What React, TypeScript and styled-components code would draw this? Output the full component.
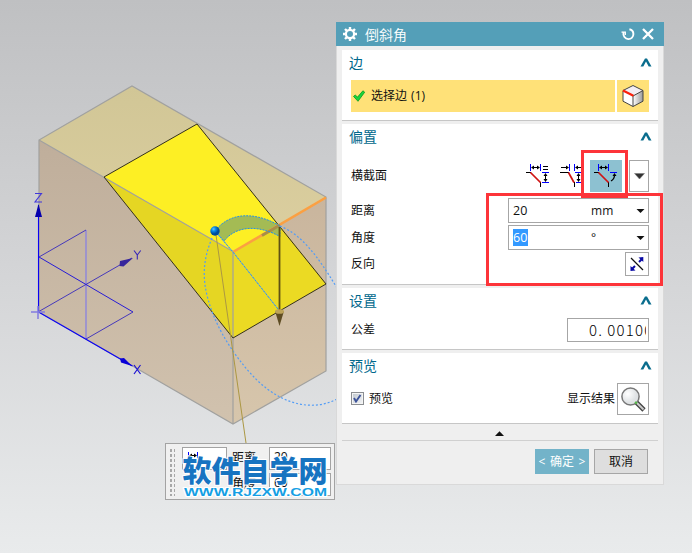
import React from "react";
import styled, { createGlobalStyle } from "styled-components";

const sans = `"Open Sans", "Noto Sans CJK SC", sans-serif`;

const GlobalStyle = createGlobalStyle`
  *, *::before, *::after { box-sizing: border-box; }
  body { margin: 0; overflow: hidden; }
`;

const Viewport = styled.div`
  position: relative;
  width: 692px;
  height: 553px;
  overflow: hidden;
  background: linear-gradient(#bfc0c2, #d4d5d7 50%, #e9ebec);
  font: 12px/16px ${sans};
  color: #111;
`;

const Scene = styled.svg`
  position: absolute;
  left: 0;
  top: 0;
`;

const Dialog = styled.section`
  position: absolute;
  left: 336px;
  top: 22px;
  width: 328px;
  height: 463px;
  display: flex;
  flex-direction: column;
  background: #efefef;
  border: 1px solid #d9d9d9;
  border-top: 0;
`;

const TitleBar = styled.header`
  display: flex;
  align-items: center;
  flex: none;
  height: 24px;
  margin: 0 -1px;
  padding: 0 9px 0 7px;
  background: #549fb8;
  color: #fff;
  font-size: 14px;
`;

const TitleText = styled.span`
  flex: 1;
  margin-left: 8px;
  padding-top: 1px;
  font-weight: 350;
`;

const Sections = styled.div`
  display: flex;
  flex-direction: column;
  padding: 4px 5px 0;
`;

const Card = styled.div<{ $height: number; $gap: number }>`
  height: ${(p) => p.$height}px;
  margin-bottom: ${(p) => p.$gap}px;
  padding: 0 9px;
  background: #fff;
  border-bottom: 1px solid #c6c6c6;
`;

const CardHeader = styled.div<{ $height: number }>`
  display: flex;
  justify-content: space-between;
  height: ${(p) => p.$height}px;
  margin: 0 -4px 0 -2px;
  padding-top: 3px;
  color: #00688c;
  font-size: 14px;
  line-height: 20px;
  svg { margin-top: 5px; }
`;

const Row = styled.div<{ $height: number; $gap?: number }>`
  display: flex;
  align-items: center;
  height: ${(p) => p.$height}px;
  margin-bottom: ${(p) => p.$gap ?? 0}px;
`;

const Label = styled.span`
  flex: 1;
`;

const Selection = styled.div`
  display: flex;
  align-items: center;
  gap: 6px;
  width: 264px;
  height: 32px;
  margin-right: 2px;
  padding-left: 2px;
  background: #ffe178;
  word-spacing: 1px;
`;

const IconButton = styled.button<{ $w: number; $h: number; $bg?: string; $framed?: boolean; $gap?: number }>`
  display: grid;
  place-items: center;
  flex: none;
  width: ${(p) => p.$w}px;
  height: ${(p) => p.$h}px;
  margin: 0 0 0 ${(p) => p.$gap ?? 0}px;
  padding: 0;
  border: ${(p) => (p.$framed ? "1px solid #a6a6a6" : "0")};
  background: ${(p) => p.$bg ?? "#fff"};
`;

const ValueField = styled.div`
  display: flex;
  align-items: center;
  width: 141px;
  height: 25px;
  padding: 0 3px 0 4px;
  border: 1px solid #a6a6a6;
  background: #fff;
`;

const FieldValue = styled.span<{ $selected?: boolean }>`
  width: 15px;
  height: 17px;
  font-size: 12.5px;
  line-height: 17px;
  letter-spacing: 0.2px;
  margin-bottom: 1px;
  background: ${(p) => (p.$selected ? "#3399ff" : "transparent")};
  color: ${(p) => (p.$selected ? "#fff" : "#111")};
`;

const ValueSlot = styled.span`
  display: flex;
  width: 78px;
`;

const Unit = styled.span`
  flex: 1;
  letter-spacing: 0.2px;
  padding-top: 1px;
`;

const ToleranceField = styled.div`
  width: 82px;
  height: 24px;
  padding: 0 0 0 21px;
  border: 1px solid #a6a6a6;
  font: 300 15px/21px "Noto Sans CJK SC", sans-serif;
  color: #000;
`;

const ToleranceText = styled.div`
  width: 57px;
  overflow: hidden;
  white-space: nowrap;
  letter-spacing: 1.2px;
`;

const Dot = styled.span`
  display: inline-block;
  width: 9px;
`;

const CheckBox = styled.span`
  display: grid;
  place-items: center;
  width: 13px;
  height: 13px;
  margin: -1px 5px 0 0;
  border: 1px solid #8b8e91;
  background: linear-gradient(135deg, #bfc6cd, #f5f6f7);
  box-shadow: inset 0 0 0 1px #f4f4f4;
`;

const Collapse = styled.div`
  display: grid;
  place-items: center;
  height: 17px;
  padding: 3px 2px 0 0;
  border-bottom: 1px solid #d0d0d0;
`;

const Footer = styled.footer`
  display: flex;
  justify-content: flex-end;
  gap: 5px;
  padding: 8px 15px 0 0;
`;

const ActionButton = styled.button<{ $primary?: boolean }>`
  width: 54px;
  height: 25px;
  padding: 0;
  border: ${(p) => (p.$primary ? "0" : "1px solid #a6a6a6")};
  background: ${(p) => (p.$primary ? "#73b3c9" : "#dedede")};
  color: ${(p) => (p.$primary ? "#fff" : "#111")};
  font: 12px/16px ${sans};
  word-spacing: ${(p) => (p.$primary ? "1.5px" : "0")};
  white-space: nowrap;
`;

const Highlight = styled.div<{ $x: number; $y: number; $w: number; $h: number }>`
  position: absolute;
  left: ${(p) => p.$x}px;
  top: ${(p) => p.$y}px;
  width: ${(p) => p.$w}px;
  height: ${(p) => p.$h}px;
  border: 3px solid #fd3439;
  pointer-events: none;
`;

const FloatingBar = styled.div`
  position: absolute;
  left: 165px;
  top: 443px;
  width: 170px;
  height: 57px;
  display: flex;
  padding: 3px 3px 3px 2px;
  border: 1px solid #a3a3a3;
  background: #f0f0f0;
`;

const Grip = styled.div`
  width: 8px;
  background-image: linear-gradient(90deg, #f0f0f0 2px, transparent 2px),
    linear-gradient(#f0f0f0 2px, #a8a8a8 2px);
  background-size: 4px 5px;
`;

const BarRows = styled.div`
  display: grid;
  grid-template-columns: 45px 32px 62px;
  grid-template-rows: 23px 23px;
  gap: 3px 5px;
  margin-left: 7px;
`;

const BarCell = styled.div<{ $framed?: boolean }>`
  padding: ${(p) => (p.$framed ? "1px 4px" : "3px 0")};
  border: ${(p) => (p.$framed ? "1px solid #a3a3a3" : "0")};
  background: ${(p) => (p.$framed ? "#fff" : "transparent")};
`;

const Chevron = () => (
  <svg width="13" height="9" viewBox="0 0 13 9">
    <path d="M0.500 8.500 5 0.600h2l4.500 7.900H8.700L6 3.500 3.300 8.500z" fill="#0a6d8d" />
  </svg>
);

const DownArrow = () => (
  <svg width="9" height="6" viewBox="0 0 9 6">
    <path d="M0.500 1h8L4.500 5z" fill="#111" />
  </svg>
);

const Gear = () => (
  <svg width="14" height="14" viewBox="0 0 14 14" fill="none" stroke="#fff">
    <circle cx="7" cy="7" r="4.100" strokeWidth="2.200" />
    <path
      d="M7 0v2.500M7 11.500V14M0 7h2.500M11.500 7H14M2 2l2 2M10 10l2 2M12 2l-2 2M4 10l-2 2"
      strokeWidth="2.400"
    />
  </svg>
);

const ResetIcon = () => (
  <svg width="14" height="14" viewBox="0 0 14 14" fill="none" stroke="#fff">
    <path d="M2.500 5C1.800 9 4.200 12.100 7.300 12.100c3 0 5.100-2.300 5.100-5.100 0-2.500-1.500-4.300-4-4.800" strokeWidth="1.900" />
    <path d="M0.500 5.200h3.800V8" strokeWidth="1.300" />
  </svg>
);

const CloseIcon = () => (
  <svg width="12" height="12" viewBox="0 0 12 12">
    <path d="m1 1 10 10M11 1 1 11" stroke="#fff" strokeWidth="2.300" />
  </svg>
);

const CheckIcon = () => (
  <svg width="12" height="12" viewBox="0 0 12 12">
    <path d="M0.500 6.400 2.200 5 4.500 7.100 9.900 0.800 11.700 2.200 5 11.300z" fill="#19d63c" stroke="#0b9820" strokeWidth="0.800" />
  </svg>
);

const CubeIcon = () => (
  <svg width="24" height="24" viewBox="0 0 24 24">
    <defs>
      <linearGradient id="cubeSide" x2="1">
        <stop stopColor="#fff" />
        <stop offset="1" stopColor="#999" />
      </linearGradient>
    </defs>
    <path d="M12 12 22 6.500v10.700L12 22.500z" fill="url(#cubeSide)" />
    <path d="M2 6.500 12 12v10.500L2 17.200z" fill="#fff" />
    <path d="m2 6.500 10-5 10 5L12 12z" fill="#f3eef4" />
    <path d="m2 6.500 10-5 10 5v10.700l-10 5.300-10-5.300zM12 12v10.500M12 12l10-5.500" fill="none" stroke="#444" />
    <path d="m2 6.500 10.400 5.300" stroke="#fb210b" strokeWidth="2.200" />
  </svg>
);

type ChamferKind = "symmetric" | "asymmetric" | "angle";

const ChamferIcon = ({ kind }: { kind: ChamferKind }) => {
  const narrow = kind === "asymmetric";
  return (
    <svg width="26" height="26" viewBox="0 1 26 26" fill="none">
      <path d={narrow ? "M1 10.500h9M15.500 20v5" : "M1 10.500h5M15.500 20v5"} stroke="#000" />
      <path d={narrow ? "m9.500 10.500 5.500 10" : "m5.500 10.500 10 10"} stroke="#d01414" strokeWidth="1.700" />
      {narrow ? (
        <>
          <path d="M10.500 2v7M15.500 2v7M16 10.500h7M17 20.500h6" stroke="#00f" />
          <path d="M2 5.500h6M18 5.500h6M19.500 13v5" stroke="#000" />
          <path d="m10 5.500-3-2v4zM16 5.500l3-2v4zM19.500 11l-2 3h4zM19.500 20l-2-3h4z" fill="#000" />
        </>
      ) : (
        <>
          <path d={`M5.500 2v7M15.500 2v7M17 10.500h7${kind === "symmetric" ? "M17 20.500h7" : ""}`} stroke="#00f" />
          <path d="M8 5.500h5" stroke="#000" />
          <path d="m6 5.500 3-2v4zM15 5.500l-3-2v4z" fill="#000" />
          {kind === "symmetric" ? (
            <>
              <path d="M18 4.500h5M18 7.500h5M20.500 13v5" stroke="#000" />
              <path d="m20.500 11-2 3h4zM20.500 20l-2-3h4z" fill="#000" />
            </>
          ) : (
            <>
              <path d="M21.500 13q0 4-3.500 6" stroke="#000" strokeWidth="1.300" />
              <path d="m21.500 11-2 3h4z" fill="#000" />
            </>
          )}
        </>
      )}
    </svg>
  );
};

const ReverseIcon = () => (
  <svg width="16" height="16" viewBox="0 0 16 16">
    <path d="m2 2 12 12" stroke="#111" strokeWidth="1.200" />
    <path d="M3 13 6 10M10 6l3-3" stroke="#0a0aa5" strokeWidth="2" />
    <path d="M14.300 1v5L9.500 1.500zM1.500 15v-5l5 4.500z" fill="#0a0aa5" />
  </svg>
);

const Magnifier = () => (
  <svg width="26" height="26" viewBox="0 0 26 26">
    <defs>
      <radialGradient id="lens" cx="0.350" cy="0.350">
        <stop stopColor="#fff" />
        <stop offset="1" stopColor="#dfe2e4" />
      </radialGradient>
    </defs>
    <path d="m16 16 8 8" stroke="#444" strokeWidth="4.600" />
    <path d="m16 16 7.500 7.500" stroke="#ccc" strokeWidth="2" />
    <circle cx="10.500" cy="10.500" r="8.600" fill="url(#lens)" stroke="#777" strokeWidth="1.500" />
    <path d="m15 16 2 1.500" stroke="#54bf45" strokeWidth="2" />
  </svg>
);

const Model = () => (
  <Scene width="692" height="553" viewBox="0 0 692 553" fill="none">
    <defs>
      <linearGradient id="topFace" x2="0" y2="1">
        <stop stopColor="#d1c696" />
        <stop offset="1" stopColor="#dccfa0" />
      </linearGradient>
      <linearGradient id="leftFace" x2="0" y2="1">
        <stop stopColor="#bfae9b" />
        <stop offset="1" stopColor="#d1c2ae" />
      </linearGradient>
      <linearGradient id="rightFace" x2="0" y2="1">
        <stop stopColor="#c9b59d" />
        <stop offset="1" stopColor="#d7c6ac" />
      </linearGradient>
      <radialGradient id="handle" cx="0.350" cy="0.300">
        <stop stopColor="#62c3ff" />
        <stop offset="0.450" stopColor="#078be7" />
        <stop offset="1" stopColor="#004c9a" />
      </radialGradient>
    </defs>

    <path d="m39 140 93-54 194 111-93 54.500z" fill="url(#topFace)" />
    <path d="m39 140 194 111.500V424L39 312z" fill="url(#leftFace)" />
    <path d="m233 251.500 93-54.500v174l-93 53z" fill="url(#rightFace)" />
    <path d="m104 177 93-53 82.500 102L233 251.500z" fill="#fdef24" />
    <path d="m104 177 129 74.500V338z" fill="#e5d623" />
    <path d="m233 251.500 46.500-26L326 284l-93 54z" fill="#ebda23" />

    <path d="M39 312V140l93-54 194 111v174l-93 53zM39 140l194 111.500V424" stroke="#a1a19f" strokeWidth="1.200" />
    <path d="m104 177 93-53 129 160-93 54z" stroke="#34301d" />

    <path d="M215 231c17-22 45-17 65-5v10.500c-20-11-43-12-56 4.500z" fill="#a4bb54" />
    <path d="m233 252 93-54.500" stroke="#fba042" strokeWidth="2.600" />
    <path d="m262 235.500 18-10.500" stroke="#a98e48" strokeWidth="2.800" />
    <path
      d="M215 231c17-22 45-17 65-5v10.500c-20-11-43-12-56 4.500z"
      stroke="#2490e8"
      strokeDasharray="2 1"
    />
    <path d="m215 231 18 21 46.500 59" stroke="#84b3bd" />
    <path d="m215 231 18 21 46.500 59" stroke="#2f93ee" strokeDasharray="2 1.500" />
    <path
      d="M212 238c-7 17-9 31-7 47 3 20 12 43 28 66 15 22 31 38 47 46 17 9 38 12 57 2M280 226c22 9 37 29 57 62"
      stroke="#529cf6"
      strokeWidth="1.200"
      strokeDasharray="2 2"
    />
    <path d="M279.500 227v85" stroke="#5f5113" strokeWidth="1.800" />
    <path d="m275 311 4.500 15 4.500-15z" fill="#5e4c23" />
    <ellipse cx="279.500" cy="311.500" rx="4.500" ry="2.300" fill="#bda359" />
    <path d="m216 235 30 208" stroke="#ab9743" />
    <circle cx="215" cy="231" r="4.700" fill="url(#handle)" />

    <path d="M86 230v109" stroke="#9189d8" strokeWidth="1.500" />
    <path d="m39 257 47-27M133 312l-47 27M38 312l94-54" stroke="#4639bb" />
    <path d="m39 257 94 55" stroke="#271cd6" />
    <path d="M38.500 312V205M38.500 312l94 54" stroke="#0a00f5" strokeWidth="1.100" />
    <path d="M31 312h14M38 306v13" stroke="#827be0" strokeWidth="1.500" />
    <path d="M38.500 204 35 217h7z" fill="#0500ad" />
    <path d="m133 258-13 3-0.500 5 4 0.500z" fill="#37259c" />
    <path d="m132 366-8-8-4 0.500 1 4z" fill="#0800d7" />
    <path d="M35 193.500h6.500l-6.500 8.500h7" stroke="#4036dc" strokeWidth="1.100" />
    <path d="m134 250.500 3.300 4.500v4.500M140.700 250.500l-3.400 4.500" stroke="#3726b8" strokeWidth="1.100" />
    <path d="m134 365 6.500 9M140.500 365l-6.500 9" stroke="#1d12d4" strokeWidth="1.200" />
  </Scene>
);

const MiniChamfer = () => (
  <svg width="26" height="16" viewBox="0 0 26 16" fill="none">
    <path d="M1.500 3v7M10.500 3v7" stroke="#00f" />
    <path d="M3 6.500h6" stroke="#000" />
    <path d="m2 6.500 3-2v4zM10 6.500l-3-2v4z" fill="#000" />
  </svg>
);

const Watermark = () => (
  <Scene width="692" height="553" viewBox="0 0 692 553">
    <g stroke="#fff" strokeLinejoin="round">
      <text
        x="182.500"
        y="481.500"
        textLength="145"
        lengthAdjust="spacingAndGlyphs"
        fontFamily='"Noto Sans CJK SC", sans-serif'
        fontSize="29"
        fontWeight="900"
        fill="#1774c1"
        strokeWidth="2"
        paintOrder="stroke"
      >
        软件自学网
      </text>
      <text
        x="184"
        y="495.500"
        textLength="143"
        lengthAdjust="spacingAndGlyphs"
        fontFamily='"Liberation Sans", sans-serif'
        fontSize="11"
        fontWeight="700"
        fill="#159fe4"
        strokeWidth="2"
        paintOrder="stroke"
      >
        WWW.RJZXW.COM
      </text>
    </g>
  </Scene>
);

export default function App() {
  return (
    <Viewport>
      <GlobalStyle />
      <Model />

      <FloatingBar>
        <Grip />
        <BarRows>
          <BarCell $framed><MiniChamfer /></BarCell>
          <BarCell>距离</BarCell>
          <BarCell $framed>20</BarCell>
          <BarCell />
          <BarCell>角度</BarCell>
          <BarCell $framed>60</BarCell>
        </BarRows>
      </FloatingBar>
      <Watermark />

      <Dialog>
        <TitleBar>
          <Gear />
          <TitleText>倒斜角</TitleText>
          <ResetIcon />
          <IconButton $w={14} $h={14} $bg="transparent" $gap={6}>
            <CloseIcon />
          </IconButton>
        </TitleBar>

        <Sections>
          <Card $height={71} $gap={3}>
            <CardHeader $height={30}>边<Chevron /></CardHeader>
            <Row $height={32}>
              <Selection>
                <CheckIcon />
                <span>选择边 (1)</span>
              </Selection>
              <IconButton $w={32} $h={32} $bg="#ffe178"><CubeIcon /></IconButton>
            </Row>
          </Card>

          <Card $height={161} $gap={3}>
            <CardHeader $height={36}>偏置<Chevron /></CardHeader>
            <Row $height={32} $gap={6}>
              <Label>横截面</Label>
              <IconButton $w={32} $h={32}><ChamferIcon kind="symmetric" /></IconButton>
              <IconButton $w={32} $h={32} $gap={2}><ChamferIcon kind="asymmetric" /></IconButton>
              <IconButton $w={32} $h={32} $bg="#8dc1d1" $gap={2}><ChamferIcon kind="angle" /></IconButton>
              <IconButton $w={20} $h={32} $framed $gap={7}>
                <svg width="11" height="7"><path d="M0.500 0.500h10L5.500 6z" fill="#333" stroke="#777" strokeWidth="0.500" /></svg>
              </IconButton>
            </Row>
            <Row $height={25} $gap={2}>
              <Label>距离</Label>
              <ValueField>
                <ValueSlot><FieldValue>20</FieldValue></ValueSlot>
                <Unit>mm</Unit>
                <DownArrow />
              </ValueField>
            </Row>
            <Row $height={25} $gap={2}>
              <Label>角度</Label>
              <ValueField>
                <ValueSlot><FieldValue $selected>60</FieldValue></ValueSlot>
                <Unit>°</Unit>
                <DownArrow />
              </ValueField>
            </Row>
            <Row $height={24}>
              <Label>反向</Label>
              <IconButton $w={24} $h={24} $framed><ReverseIcon /></IconButton>
            </Row>
          </Card>

          <Card $height={62} $gap={3}>
            <CardHeader $height={30}>设置<Chevron /></CardHeader>
            <Row $height={24}>
              <Label>公差</Label>
              <ToleranceField>
                <ToleranceText>0<Dot>.</Dot>00100</ToleranceText>
              </ToleranceField>
            </Row>
          </Card>

          <Card $height={71} $gap={0}>
            <CardHeader $height={30}>预览<Chevron /></CardHeader>
            <Row $height={32}>
              <CheckBox>
                <svg width="9" height="9"><path d="m1 4 2 3.500L7.500 1" fill="none" stroke="#3d5399" strokeWidth="1.900" /></svg>
              </CheckBox>
              <Label>预览</Label>
              <span>显示结果</span>
              <IconButton $w={32} $h={32} $framed $gap={2}><Magnifier /></IconButton>
            </Row>
          </Card>

          <Collapse>
            <svg width="9" height="5"><path d="M0 5h9L4.500 0.300z" fill="#111" /></svg>
          </Collapse>
        </Sections>

        <Footer>
          <ActionButton $primary>&lt; 确定 &gt;</ActionButton>
          <ActionButton>取消</ActionButton>
        </Footer>
      </Dialog>

      <Highlight $x={486} $y={193} $w={177} $h={93} />
      <Highlight $x={581} $y={150} $w={47} $h={48} />
    </Viewport>
  );
}
